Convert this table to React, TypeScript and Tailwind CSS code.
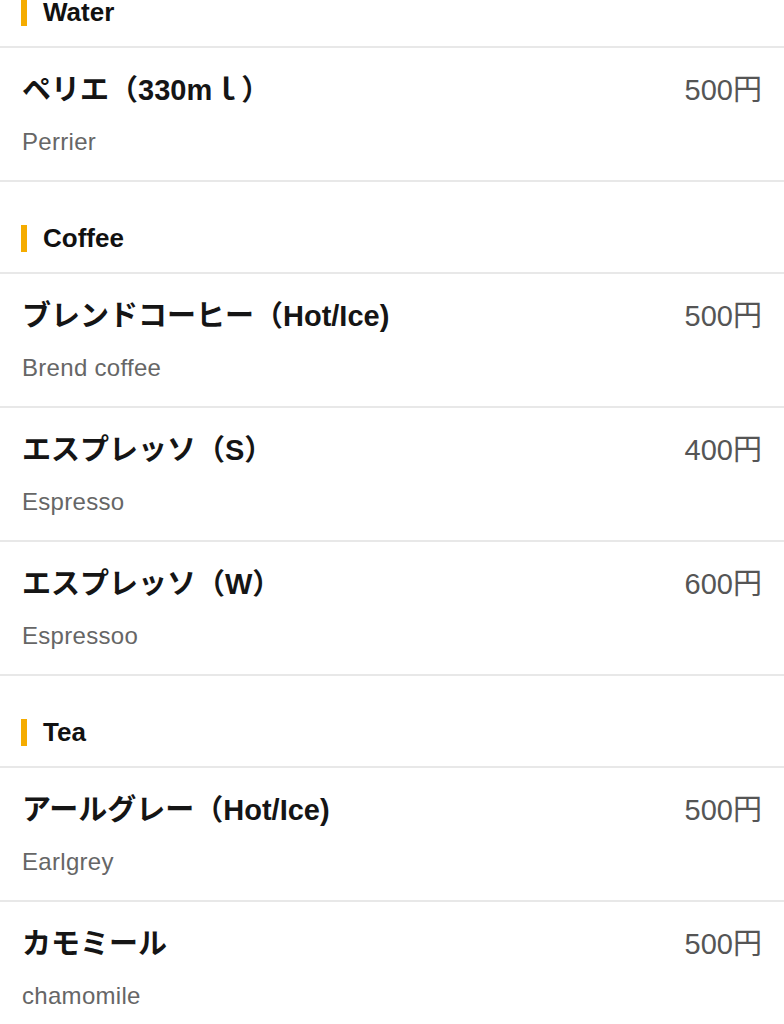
const sections = [
  {
    title: 'Water',
    items: [{ name: 'ペリエ（330mｌ）', sub: 'Perrier', price: '500円' }],
  },
  {
    title: 'Coffee',
    items: [
      { name: 'ブレンドコーヒー（Hot/Ice)', sub: 'Brend coffee', price: '500円' },
      { name: 'エスプレッソ（S）', sub: 'Espresso', price: '400円' },
      { name: 'エスプレッソ（W）', sub: 'Espressoo', price: '600円' },
    ],
  },
  {
    title: 'Tea',
    items: [
      { name: 'アールグレー（Hot/Ice)', sub: 'Earlgrey', price: '500円' },
      { name: 'カモミール', sub: 'chamomile', price: '500円' },
    ],
  },
]

const font = { fontFamily: '"Liberation Sans", "Noto Sans CJK JP", sans-serif' }

export default function App() {
  return (
    <div className="h-[1024px] w-full overflow-hidden bg-white" style={font}>
      <div className="-mt-[44px]">
        {sections.map((section) => (
          <div key={section.title}>
            <div className="flex items-center border-b-2 border-[#e8e8e8] pb-[20px] pl-[21px] pt-[42px]">
              <span className="h-[27px] w-[6px] bg-[#f5ac00]" />
              <h2 className="ml-[16px] text-[26px] font-bold leading-[28px] text-[#111]">{section.title}</h2>
            </div>
            {section.items.map((item) => (
              <div
                key={item.sub}
                className="flex h-[134px] items-start justify-between border-b-2 border-[#e8e8e8] px-[22px] pt-[23px]"
              >
                <div>
                  <p className="text-[29px] font-bold leading-[38px] text-[#151515]">{item.name}</p>
                  <p className="mt-[16px] text-[24px] leading-[34px] tracking-[0.3px] text-[#666]">{item.sub}</p>
                </div>
                <p className="text-[29px] leading-[38px] text-[#555]">{item.price}</p>
              </div>
            ))}
          </div>
        ))}
      </div>
    </div>
  )
}
